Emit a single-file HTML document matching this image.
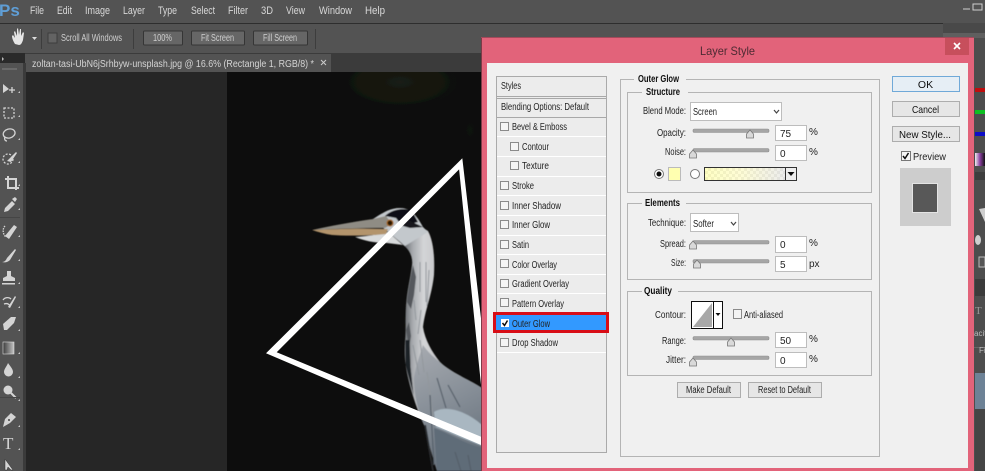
<!DOCTYPE html>
<html><head><meta charset="utf-8"><style>
html,body{margin:0;padding:0;background:#262626;width:985px;height:471px;overflow:hidden}
svg{display:block;font-family:"Liberation Sans",sans-serif}
.m{fill:#d8d8d8;font-size:11px}
.o{fill:#cfcfcf;font-size:10px}
.d{fill:#222;font-size:10px}
.b{fill:#111;font-size:10px;font-weight:bold}
.i{fill:none;stroke:#d4d4d4;stroke-width:1.3}
.f{fill:#d4d4d4}
.ck{fill:#f4f4f4;stroke:#8a8a8a}
.fs{fill:none;stroke:#b4b4b4}
.in{fill:#fff;stroke:#bdbdbd}
.tr{fill:#a6a6a6;stroke:#8f8f8f;stroke-width:.6}
.th{fill:#d9d9d9;stroke:#777;stroke-width:.8}
.bt{fill:#e6e6e6;stroke:#adadad}
.ln{stroke:#fff;stroke-width:1}
</style></head><body>
<svg width="985" height="471" viewBox="0 0 985 471" xmlns="http://www.w3.org/2000/svg">
<defs>
<filter id="s" x="0" y="0" width="100%" height="100%"><feGaussianBlur stdDeviation="0.3"/></filter>
<filter id="s2" x="-5%" y="-5%" width="110%" height="110%"><feGaussianBlur stdDeviation="0.6"/></filter>
<radialGradient id="g1"><stop offset="0" stop-color="#1a1c13"/><stop offset="1" stop-color="#1a1c13" stop-opacity="0"/></radialGradient>
<radialGradient id="g2"><stop offset="0" stop-color="#10120d"/><stop offset="1" stop-color="#10120d" stop-opacity="0"/></radialGradient>
<linearGradient id="neck" gradientUnits="userSpaceOnUse" x1="405" x2="436" y1="0" y2="0"><stop offset="0" stop-color="#6e7276"/><stop offset=".25" stop-color="#a8abaf"/><stop offset=".6" stop-color="#d4d5d7"/><stop offset="1" stop-color="#c6c7ca"/></linearGradient>
<linearGradient id="body" gradientUnits="userSpaceOnUse" x1="420" y1="350" x2="482" y2="471"><stop offset="0" stop-color="#a4a8ae"/><stop offset=".45" stop-color="#858d96"/><stop offset="1" stop-color="#5d6873"/></linearGradient>
<linearGradient id="gr" x1="0" x2="1" y1="0" y2="0"><stop offset="0" stop-color="#ffffb0"/><stop offset=".45" stop-color="#fdfbc8"/><stop offset="1" stop-color="#e6e6e6"/></linearGradient>
<linearGradient id="tg" x1="0" x2="1" y1="0" y2="0"><stop offset="0" stop-color="#3c3c3c"/><stop offset="1" stop-color="#c4c4c4"/></linearGradient>
<linearGradient id="pg" x1="0" x2="1" y1="0" y2="0"><stop offset="0" stop-color="#eee"/><stop offset=".5" stop-color="#8a3fa0"/><stop offset="1" stop-color="#111"/></linearGradient>
<pattern id="chk" width="6" height="6" patternUnits="userSpaceOnUse"><rect width="3" height="3" fill="#cfcfcf"/><rect x="3" y="3" width="3" height="3" fill="#cfcfcf"/></pattern>
<clipPath id="img"><rect x="227" y="72" width="260" height="399"/></clipPath>
</defs>
<g filter="url(#s)">
<!-- chrome -->
<rect width="985" height="471" fill="#262626"/>
<rect width="985" height="23" fill="#535353"/>
<rect y="23" width="985" height="1" fill="#2f2f2f"/>
<rect y="24" width="985" height="29" fill="#535353"/>
<rect y="53" width="985" height="19" fill="#3b3b3b"/>
<rect y="53" width="25" height="19" fill="#2c2c2c"/>
<rect x="25" y="54" width="306" height="18" fill="#535353"/>
<rect x="0" y="63" width="23" height="408" fill="#535353"/>
<rect x="23" y="63" width="3" height="408" fill="#3a3a3a"/>
<rect x="26" y="72" width="201" height="399" fill="#262626"/>
<!-- top -->
<text x="-1" y="16" font-size="17" font-weight="bold" fill="#5e9ed6">Ps</text>
<text class="m" x="30" y="14" textLength="14" lengthAdjust="spacingAndGlyphs">File</text>
<text class="m" x="57" y="14" textLength="15" lengthAdjust="spacingAndGlyphs">Edit</text>
<text class="m" x="85" y="14" textLength="25" lengthAdjust="spacingAndGlyphs">Image</text>
<text class="m" x="123" y="14" textLength="22" lengthAdjust="spacingAndGlyphs">Layer</text>
<text class="m" x="158" y="14" textLength="19" lengthAdjust="spacingAndGlyphs">Type</text>
<text class="m" x="191" y="14" textLength="24" lengthAdjust="spacingAndGlyphs">Select</text>
<text class="m" x="228" y="14" textLength="20" lengthAdjust="spacingAndGlyphs">Filter</text>
<text class="m" x="261" y="14" textLength="12" lengthAdjust="spacingAndGlyphs">3D</text>
<text class="m" x="286" y="14" textLength="19" lengthAdjust="spacingAndGlyphs">View</text>
<text class="m" x="319" y="14" textLength="33" lengthAdjust="spacingAndGlyphs">Window</text>
<text class="m" x="365" y="14" textLength="20" lengthAdjust="spacingAndGlyphs">Help</text>
<path d="M963 9h7M973 4h9v6h-9z" fill="none" stroke="#cfcfcf"/>
<!-- options -->
<path d="M15 44c-2-3-3-6-3-8l1-1 2 3-1-6 1-1 2 5 0-7 1-1 1 7 1-6 1 0 0 7 2-4 1 1-1 7c-1 3-2 5-4 5z" fill="#e6e6e6"/>
<path d="M32 37h5l-2.500 3z" fill="#ddd"/>
<rect x="41" y="29" width="1" height="20" fill="#3e3e3e"/>
<rect x="48" y="33" width="9" height="10" fill="#646464" stroke="#3c3c3c"/>
<text class="o" x="61" y="41" textLength="61" lengthAdjust="spacingAndGlyphs">Scroll All Windows</text>
<rect x="133" y="29" width="1" height="20" fill="#3e3e3e"/>
<rect x="143.500" y="31" width="39" height="14" rx="1" fill="#666" stroke="#363636"/>
<text class="o" x="153" y="41" textLength="19" lengthAdjust="spacingAndGlyphs">100%</text>
<rect x="191.500" y="31" width="53" height="14" rx="1" fill="#666" stroke="#363636"/>
<text class="o" x="201" y="41" textLength="33" lengthAdjust="spacingAndGlyphs">Fit Screen</text>
<rect x="253.500" y="31" width="54" height="14" rx="1" fill="#666" stroke="#363636"/>
<text class="o" x="263" y="41" textLength="34" lengthAdjust="spacingAndGlyphs">Fill Screen</text>
<rect x="315" y="29" width="1" height="20" fill="#3e3e3e"/>
<!-- tab -->
<text x="32" y="67" font-size="10" fill="#d4d4d4" textLength="282" lengthAdjust="spacingAndGlyphs">zoltan-tasi-UbN6jSrhbyw-unsplash.jpg @ 16.6% (Rectangle 1, RGB/8) *</text>
<path d="M321 60l5 5M326 60l-5 5" stroke="#ccc"/>
<path d="M2 57l2 2-2 2z" fill="#bbb"/>
<rect x="2" y="68" width="15" height="2" fill="#6b6b6b"/>
<!-- tools -->
<g>
<path d="M3 84l6 5-6 4z" class="f"/><path d="M12 87v6M9 90h6" class="i" stroke-width="1"/>
<rect x="4" y="108" width="10" height="10" class="i" stroke-dasharray="2 1.500"/>
<ellipse cx="9" cy="133.500" rx="6" ry="4.500" class="i" transform="rotate(-15 9 133)"/><path d="M5 137c-1 2 0 4 2 4" class="i"/>
<circle cx="8" cy="159" r="5" class="i" stroke-dasharray="2 1.500"/><path d="M7 161l9-9 1 1-6 9z" class="f"/>
<path d="M8 176v12h11M5 179h11v11" fill="none" stroke="#d4d4d4" stroke-width="2"/>
<path d="M4 212l1-4 7-7 3 3-7 7zM12 199l3-2 2 2-2 3z" class="f"/>
<rect x="0" y="217" width="20" height="1" fill="#444"/>
<path d="M5 236l9-11 3 2-8 12z" class="f"/><path d="M5 226c-3 3-2 9 1 11" class="i" stroke-dasharray="1.500 1"/>
<path d="M2 262c3 0 4-2 5-4l8-9 1 1-6 10c-2 2-5 3-8 2z" class="f"/>
<path d="M7 271h4l0 5 4 2v3H3v-3l4-2z" class="f"/><rect x="2" y="283" width="13" height="1.500" fill="#d4d4d4"/>
<path d="M3 300c2-3 6-3 8-1M4 304c3-1 5 0 6 2" class="i" stroke-width="2"/><path d="M8 307l7-11 1 1-6 11z" class="f"/>
<path d="M3 324l8-7h5l-2 6-7 7H4z" class="f"/>
<rect x="3" y="342" width="11" height="12" fill="url(#tg)" stroke="#ddd" stroke-width=".6"/>
<path d="M8 363c2 3 5 6 5 9a4.500 4.500 0 0 1-9 0c0-3 3-6 4-9z" class="f"/>
<circle cx="8" cy="390" r="4.500" class="f"/><path d="M11 393l5 5" stroke="#d4d4d4" stroke-width="2"/>
<rect x="0" y="397" width="20" height="1" fill="#444"/>
<path d="M3 427l2-8 6-6 5 4-6 6z" fill="#d4d4d4"/><circle cx="9" cy="420" r="1" fill="#444"/>
<text x="3" y="449" font-family="Liberation Serif" font-size="17" fill="#d4d4d4">T</text>
<path d="M5 459v11h2l1-3 3 3h2z" fill="#d4d4d4" stroke="#333" stroke-width=".5"/>
</g>
<path d="M18 93l2 0 0-2zM18 117l2 0 0-2zM18 140l2 0 0-2zM18 163l2 0 0-2zM18 186l2 0 0-2zM18 210l2 0 0-2zM18 237l2 0 0-2zM18 261l2 0 0-2zM18 284l2 0 0-2zM18 308l2 0 0-2zM18 331l2 0 0-2zM18 354l2 0 0-2zM18 378l2 0 0-2zM18 401l2 0 0-2zM18 427l2 0 0-2zM18 450l2 0 0-2z" fill="#c8c8c8"/>
<!-- right panel sliver -->
<rect x="943" y="23" width="42" height="448" fill="#4a4a4a"/>
<rect x="974" y="37" width="11" height="434" fill="#4d4d4d"/>
<rect x="943" y="33" width="42" height="5" fill="#5f5f5f"/>
<rect x="975" y="88" width="10" height="4" fill="#c01010"/>
<rect x="975" y="110" width="10" height="4" fill="#10c020"/>
<rect x="975" y="132" width="10" height="4" fill="#1010c8"/>
<rect x="975" y="153" width="10" height="13" fill="url(#pg)"/>
<rect x="975" y="172" width="10" height="8" fill="#3d3d3d"/>
<path d="M979 209l6-1v14z" fill="#cfcfcf"/>
<ellipse cx="978" cy="240" rx="3" ry="5" fill="#cfcfcf"/>
<rect x="979" y="257" width="6" height="10" fill="#555" stroke="#bbb"/>
<rect x="975" y="279" width="10" height="17" fill="#3a3a3a"/>
<text x="975" y="314" font-family="Liberation Serif" font-size="11" fill="#999">T</text>
<text x="974" y="336" font-size="8" fill="#bbb">acit</text>
<rect x="974" y="347" width="11" height="1" fill="#666"/>
<text x="979" y="353" font-size="8" fill="#bbb">Fi</text>
<rect x="975" y="373" width="10" height="36" fill="#6d8296"/>
<rect x="975" y="409" width="10" height="62" fill="#444"/>
<!-- photo -->
<g clip-path="url(#img)">
<rect x="227" y="72" width="260" height="399" fill="#090908"/>
<ellipse cx="400" cy="82" rx="90" ry="40" fill="url(#g1)"/>
<ellipse cx="470" cy="130" rx="40" ry="70" fill="url(#g2)"/>
<g filter="url(#s2)">
<path d="M403 245C410 250 413 258 412 265C410 280 407 290 406 305C405 320 406 330 405 340C404 355 405 365 408 378C412 395 418 412 424 425C428 440 433 458 437 471L482 471L482 388C470 380 450 372 440 362C432 352 425 340 423 327C425 310 432 295 434 275C435 255 433 240 428 231L420 226L395 232Z" fill="url(#neck)"/>
<path d="M423 345C428 352 432 356 440 362C450 372 470 380 482 388V471H437C433 458 428 440 424 425C418 412 414 395 414 378C416 365 420 355 423 345Z" fill="url(#body)"/>
<path d="M434 412C445 405 465 410 482 425V446L462 438L436 427Z" fill="#a9b7c1"/>
<path d="M437 471L434 428C447 432 465 444 482 448V471Z" fill="#5f6c78"/>
<path d="M373 219C380 215 388 208 400 208C410 208 416 214 423 227L428 232L405 246L388 232Z" fill="#c3c8cc"/>
<path d="M355 237C365 236 378 235 388 232L403 245L387 243C375 243 365 241 355 237Z" fill="#d8dadb"/>
<path d="M312 230C330 226 352 222 373 219L386 216L392 224L385 228C360 228 335 229 312 230Z" fill="#8f8c84"/>
<path d="M312 230C335 229 360 228 388 229L386 234C365 236 345 236 332 235C325 234 318 232 312 230Z" fill="#b3946c"/>
<path d="M385 216C392 209 405 207 412 211L418 222L402 226L396 218Z" fill="#0f1114"/>
<path d="M408 220L423 227L410 228L403 226Z" fill="#14161a"/>
<circle cx="390" cy="223" r="3" fill="#2a1606" stroke="#a76b2a" stroke-width="1.200"/>
<path d="M407 302c1-12 4-28 6-37l3 12-2 18-3 14zM406 330l3-8 2 14-2 12z" fill="#55595d"/>
<path d="M405.500 340v25l8 30-3-28-1-27z" fill="#1f2225"/>
<path d="M420 262v30M426 262v40M414 300l2 20M421 310l-3 24M429 270l-2 36M413 345l6 30M420 340l4 32M427 372l6 45" stroke="#92979c" stroke-width="1" fill="none"/>
<path d="M430 395l4 70M437 378l9 30M448 385l12 22M455 452l6 19M468 455l3 16" stroke="#555f69" stroke-width="1.200" fill="none"/>
<path d="M425 425l8 46" stroke="#272b2f" stroke-width="2" fill="none"/>
</g>
<path fill-rule="evenodd" fill="#fff" d="M462.300 158.300L266 353.300L496.600 451.600ZM459.100 169.400L276.700 352.300L486.500 439Z"/>
</g>
<!-- dialog -->
<rect x="481" y="37" width="493" height="434" fill="#e2647a"/>
<rect x="481" y="37" width="1" height="434" fill="#7d3a46"/>
<rect x="481" y="37" width="493" height="1" fill="#a34a5a"/>
<rect x="945" y="38" width="24" height="17" fill="#c7505c"/>
<path d="M954 43l6 6M960 43l-6 6" stroke="#fff" stroke-width="1.600"/>
<text x="700" y="55" font-size="12" fill="#4d2a33" textLength="55" lengthAdjust="spacingAndGlyphs">Layer Style</text>
<rect x="487" y="63" width="481" height="405" fill="#f0f0f0"/>
<!-- styles list -->
<rect x="496.500" y="76.500" width="110" height="376" fill="#ececec" stroke="#aaa"/>
<path d="M497 96.500h109M497 98.500h109M497 117.500h109" stroke="#a8a8a8" fill="none"/>
<path class="ln" d="M497 136.500h109M497 156.500h109M497 176.500h109M497 195.500h109M497 215.500h109M497 235.500h109M497 254.500h109M497 274.500h109M497 293.500h109M497 313.500h109M497 352.500h109"/>
<text class="d" x="501" y="89" textLength="20" lengthAdjust="spacingAndGlyphs">Styles</text>
<text class="d" x="501" y="110" textLength="88" lengthAdjust="spacingAndGlyphs">Blending Options: Default</text>
<g class="ck">
<rect x="500.500" y="122.500" width="8" height="8"/>
<rect x="510.500" y="142.500" width="8" height="8"/>
<rect x="510.500" y="161.500" width="8" height="8"/>
<rect x="500.500" y="181.500" width="8" height="8"/>
<rect x="500.500" y="201.500" width="8" height="8"/>
<rect x="500.500" y="220.500" width="8" height="8"/>
<rect x="500.500" y="240.500" width="8" height="8"/>
<rect x="500.500" y="259.500" width="8" height="8"/>
<rect x="500.500" y="279.500" width="8" height="8"/>
<rect x="500.500" y="298.500" width="8" height="8"/>
<rect x="500.500" y="338.500" width="8" height="8"/>
</g>
<text class="d" x="512" y="130" textLength="55" lengthAdjust="spacingAndGlyphs">Bevel &amp; Emboss</text>
<text class="d" x="522" y="150" textLength="27" lengthAdjust="spacingAndGlyphs">Contour</text>
<text class="d" x="522" y="169" textLength="27" lengthAdjust="spacingAndGlyphs">Texture</text>
<text class="d" x="512" y="189" textLength="22" lengthAdjust="spacingAndGlyphs">Stroke</text>
<text class="d" x="512" y="209" textLength="49" lengthAdjust="spacingAndGlyphs">Inner Shadow</text>
<text class="d" x="512" y="228" textLength="38" lengthAdjust="spacingAndGlyphs">Inner Glow</text>
<text class="d" x="512" y="248" textLength="17" lengthAdjust="spacingAndGlyphs">Satin</text>
<text class="d" x="512" y="268" textLength="45" lengthAdjust="spacingAndGlyphs">Color Overlay</text>
<text class="d" x="512" y="287" textLength="57" lengthAdjust="spacingAndGlyphs">Gradient Overlay</text>
<text class="d" x="512" y="307" textLength="52" lengthAdjust="spacingAndGlyphs">Pattern Overlay</text>
<rect x="494.500" y="313.500" width="113" height="18" fill="#3399ff" stroke="#d80c18" stroke-width="3"/>
<rect x="501" y="319" width="8" height="8" fill="#fff"/>
<path d="M502.500 323l2 2.500 3-5" fill="none" stroke="#111" stroke-width="1.500"/>
<text class="d" x="512" y="327" textLength="38" lengthAdjust="spacingAndGlyphs">Outer Glow</text>
<text class="d" x="512" y="346" textLength="46" lengthAdjust="spacingAndGlyphs">Drop Shadow</text>
<!-- panel -->
<path class="fs" d="M634 79.500H620.500V456.500H879.500V79.500H686"/>
<text class="b" x="638" y="82" textLength="41" lengthAdjust="spacingAndGlyphs">Outer Glow</text>
<path class="fs" d="M642 92.500H627.500V192.500H871.500V92.500H688"/>
<text class="b" x="646" y="95" textLength="34" lengthAdjust="spacingAndGlyphs">Structure</text>
<text class="d" x="643" y="114" textLength="43" lengthAdjust="spacingAndGlyphs">Blend Mode:</text>
<rect class="in" x="690.500" y="102.500" width="91" height="18"/>
<text class="d" x="693" y="115" textLength="24" lengthAdjust="spacingAndGlyphs">Screen</text>
<path d="M774 110l2.500 3 2.500-3" fill="none" stroke="#444" stroke-width="1.200"/>
<text class="d" x="657" y="136" textLength="29" lengthAdjust="spacingAndGlyphs">Opacity:</text>
<rect class="tr" x="693" y="129" width="76" height="3.500" rx="1.500"/>
<path class="th" d="M750 130l3.500 4v4h-7v-4z"/>
<rect class="in" x="775.500" y="125.500" width="31" height="15"/>
<text class="d" x="780" y="137">75</text><text class="d" x="809" y="135">%</text>
<text class="d" x="665" y="155" textLength="21" lengthAdjust="spacingAndGlyphs">Noise:</text>
<rect class="tr" x="693" y="148.500" width="76" height="3.500" rx="1.500"/>
<path class="th" d="M693 150l3.500 4v4h-7v-4z"/>
<rect class="in" x="775.500" y="145.500" width="31" height="15"/>
<text class="d" x="780" y="157">0</text><text class="d" x="809" y="155">%</text>
<circle cx="659" cy="174" r="4.500" fill="#fff" stroke="#777"/><circle cx="659" cy="174" r="2.500" fill="#111"/>
<rect x="668.500" y="167.500" width="12" height="13" fill="#ffffb0" stroke="#bbb"/>
<circle cx="695" cy="174" r="4.500" fill="#fff" stroke="#777"/>
<rect x="704" y="167" width="93" height="14" fill="#333"/>
<rect x="705" y="168" width="80" height="12" fill="#fff"/><rect x="705" y="168" width="80" height="12" fill="url(#chk)"/><rect x="705" y="168" width="80" height="12" fill="url(#gr)" opacity=".75"/>
<rect x="786" y="168" width="10" height="12" fill="#eee"/>
<path d="M787.500 172h7l-3.500 4z" fill="#111"/>
<!-- elements -->
<path class="fs" d="M642 203.500H627.500V279.500H871.500V203.500H686"/>
<text class="b" x="645" y="206" textLength="35" lengthAdjust="spacingAndGlyphs">Elements</text>
<text class="d" x="648" y="226" textLength="38" lengthAdjust="spacingAndGlyphs">Technique:</text>
<rect class="in" x="690.500" y="213.500" width="48" height="18"/>
<text class="d" x="693" y="227" textLength="21" lengthAdjust="spacingAndGlyphs">Softer</text>
<path d="M731 222l2.500 3 2.500-3" fill="none" stroke="#444" stroke-width="1.200"/>
<text class="d" x="660" y="247" textLength="26" lengthAdjust="spacingAndGlyphs">Spread:</text>
<rect class="tr" x="693" y="240.500" width="76" height="3.500" rx="1.500"/>
<path class="th" d="M693 241l3.500 4v4h-7v-4z"/>
<rect class="in" x="775.500" y="236.500" width="31" height="16"/>
<text class="d" x="780" y="248">0</text><text class="d" x="809" y="246">%</text>
<text class="d" x="671" y="266" textLength="15" lengthAdjust="spacingAndGlyphs">Size:</text>
<rect class="tr" x="693" y="259.500" width="76" height="3.500" rx="1.500"/>
<path class="th" d="M697 260l3.500 4v4h-7v-4z"/>
<rect class="in" x="775.500" y="256.500" width="31" height="15"/>
<text class="d" x="780" y="268">5</text><text class="d" x="809" y="267">px</text>
<!-- quality -->
<path class="fs" d="M642 291.500H627.500V375.500H871.500V291.500H678"/>
<text class="b" x="644" y="294" textLength="28" lengthAdjust="spacingAndGlyphs">Quality</text>
<text class="d" x="655" y="318" textLength="31" lengthAdjust="spacingAndGlyphs">Contour:</text>
<rect x="691" y="301" width="32" height="28" fill="#111"/>
<rect x="692" y="302" width="21" height="26" fill="#fff"/>
<path d="M693 327L712 303V327Z" fill="#a8a8a8"/>
<rect x="714" y="302" width="8" height="26" fill="#fff"/>
<path d="M715.500 313h5l-2.500 3z" fill="#111"/>
<rect class="ck" x="733.500" y="309.500" width="8" height="9"/>
<text class="d" x="744" y="318" textLength="39" lengthAdjust="spacingAndGlyphs">Anti-aliased</text>
<text class="d" x="662" y="344" textLength="24" lengthAdjust="spacingAndGlyphs">Range:</text>
<rect class="tr" x="693" y="336.500" width="76" height="3.500" rx="1.500"/>
<path class="th" d="M731 338l3.500 4v4h-7v-4z"/>
<rect class="in" x="775.500" y="332.500" width="31" height="15"/>
<text class="d" x="780" y="344">50</text><text class="d" x="809" y="342">%</text>
<text class="d" x="666" y="363" textLength="20" lengthAdjust="spacingAndGlyphs">Jitter:</text>
<rect class="tr" x="693" y="356" width="76" height="3.500" rx="1.500"/>
<path class="th" d="M693 358l3.500 4v4h-7v-4z"/>
<rect class="in" x="775.500" y="352.500" width="31" height="15"/>
<text class="d" x="780" y="364">0</text><text class="d" x="809" y="362">%</text>
<rect class="bt" x="677.500" y="382.500" width="63" height="15"/>
<text class="d" x="686" y="393" textLength="45" lengthAdjust="spacingAndGlyphs">Make Default</text>
<rect class="bt" x="748.500" y="382.500" width="73" height="15"/>
<text class="d" x="758" y="393" textLength="53" lengthAdjust="spacingAndGlyphs">Reset to Default</text>
<!-- right buttons -->
<rect x="892.500" y="76.500" width="67" height="15" fill="#e6eef5" stroke="#6fa9d8"/>
<text x="925.500" y="88" font-size="10.500" fill="#111" text-anchor="middle">OK</text>
<rect class="bt" x="892.500" y="101.500" width="67" height="15"/>
<text x="912" y="113" font-size="10.500" fill="#111" textLength="27" lengthAdjust="spacingAndGlyphs">Cancel</text>
<rect class="bt" x="892.500" y="126.500" width="67" height="15"/>
<text x="899" y="138" font-size="10.500" fill="#111" textLength="52" lengthAdjust="spacingAndGlyphs">New Style...</text>
<rect x="901.500" y="151.500" width="9" height="9" fill="#f6f6f6" stroke="#777"/>
<path d="M903 156l2 2.500 3.500-5.500" fill="none" stroke="#111" stroke-width="1.500"/>
<text x="913" y="160" font-size="10" fill="#222" textLength="33" lengthAdjust="spacingAndGlyphs">Preview</text>
<rect x="900" y="168" width="51" height="58" fill="#cdcdcd"/>
<rect x="912" y="183" width="26" height="30" fill="#e4e4e4"/>
<rect x="913" y="184" width="24" height="28" fill="#585858"/>
</g>
</svg>
</body></html>
